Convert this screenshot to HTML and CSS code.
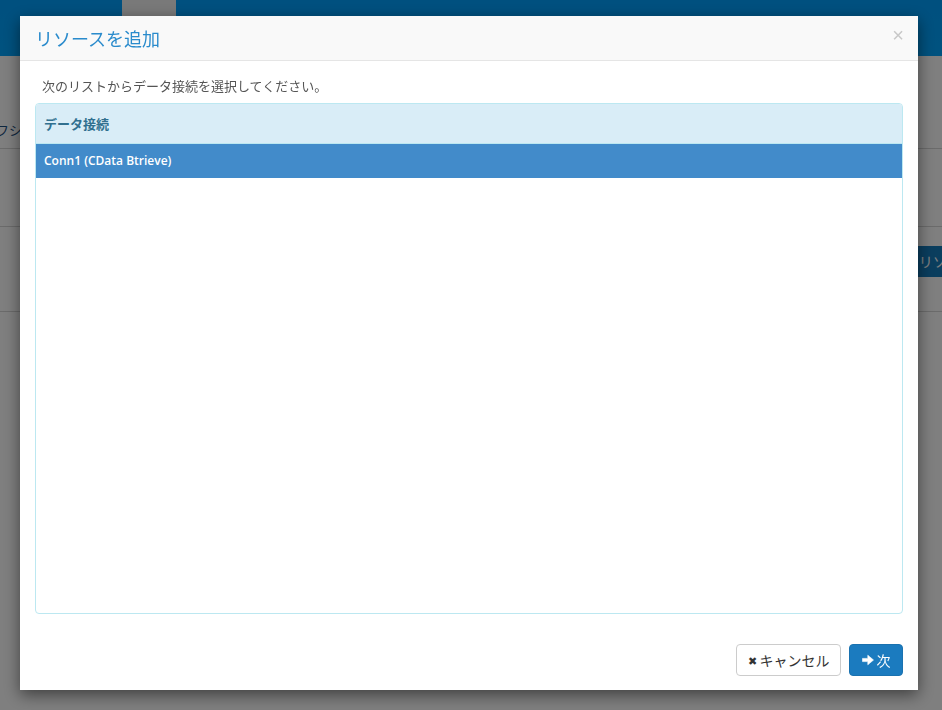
FILE: index.html
```html
<!DOCTYPE html>
<html lang="ja">
<head>
<meta charset="UTF-8">
<title>リソースを追加</title>
<link rel="stylesheet" href="styles.css">
</head>
<body>

<div class="topbar">
  <div class="tab"></div>
</div>

<div class="page">
  <div class="row row-first"><span class="side-text">フシ</span></div>
  <div class="row row-second"><span class="side-btn">リソース</span></div>
</div>

<div class="backdrop"></div>

<div class="modal">
  <div class="modal-header">
    <h4 class="modal-title">リソースを追加</h4>
    <span class="close">&times;</span>
  </div>
  <div class="modal-body">
    <p class="hint">次のリストからデータ接続を選択してください。</p>
    <div class="panel">
      <div class="panel-heading">データ接続</div>
      <ul class="conn-list">
        <li class="selected">Conn1 (CData Btrieve)</li>
      </ul>
    </div>
  </div>
  <div class="modal-footer">
    <button class="btn btn-default"><span class="ico">&#10006;</span>キャンセル</button>
    <button class="btn btn-primary">
      <svg class="arrow" width="12" height="12" viewBox="0 0 12 12"><path d="M0.5 4.4h5.3V1.2L11.5 6 5.8 10.8V7.6H0.5z" fill="#fff" stroke="#fff" stroke-width="0.6" stroke-linejoin="round"/></svg>次
    </button>
  </div>
</div>

</body>
</html>
```

FILE: styles.css
```css
body {
  margin: 0;
  font-family: "Noto Sans CJK JP", "Open Sans", sans-serif;
  background-color: #fff;
  height: 710px;
  overflow: hidden;
}

.topbar {
  height: 56px;
  background: linear-gradient(#00a0ff, #00a5ff);
}

.tab {
  margin-left: 122px;
  width: 54px;
  height: 56px;
  background-color: #f2f2f2;
}

.page {
  padding-top: 92px;
}

.row {
  border-top: 1px solid #d6d6d6;
  position: relative;
}

.row-first {
  height: 77px;
}

.row-second {
  height: 84px;
  border-bottom: 1px solid #d6d6d6;
}

.side-text {
  position: absolute;
  left: -4px;
  top: -29px;
  font-size: 13px;
  color: #1d4e7e;
}

.side-btn {
  position: absolute;
  right: -40px;
  top: 19px;
  height: 31px;
  line-height: 31px;
  padding: 0 8px;
  background-color: #157cbd;
  color: #fff;
  font-size: 14px;
  white-space: nowrap;
}

.backdrop {
  position: fixed;
  left: 0;
  top: 0;
  right: 0;
  bottom: 0;
  background-color: rgba(0, 0, 0, 0.5);
}

.modal {
  position: fixed;
  left: 20px;
  top: 16px;
  width: 898px;
  height: 674px;
  background-color: #fff;
  box-shadow: 0 5px 15px rgba(0, 0, 0, 0.5);
  display: flex;
  flex-direction: column;
}

.modal-header {
  height: 44px;
  background-color: #f9f9f9;
  border-bottom: 1px solid #e5e5e5;
  display: flex;
  align-items: center;
  justify-content: space-between;
  padding: 0 16px 0 15px;
}

.modal-title {
  margin: 0;
  font-size: 18px;
  font-weight: normal;
  color: #2a8bcc;
}

.close {
  font-family: "Liberation Sans", sans-serif;
  font-size: 20px;
  color: #c8c8c8;
  margin-right: -2px;
  margin-top: -6px;
}

.modal-body {
  flex: 1;
  padding: 15px;
  display: flex;
  flex-direction: column;
}

.hint {
  margin: 0 0 7px;
  padding-left: 7px;
  font-size: 13px;
  line-height: 20px;
  color: #555;
}

.panel {
  flex: 1;
  border: 1px solid #bce8f1;
  border-radius: 4px;
  overflow: hidden;
}

.panel-heading {
  height: 39px;
  line-height: 39px;
  padding-left: 8px;
  background-color: #d9edf7;
  border-bottom: 1px solid #bce8f1;
  color: #31708f;
  font-size: 13px;
  font-weight: bold;
}

.conn-list {
  list-style: none;
  margin: 0;
  padding: 0;
}

.conn-list li {
  height: 34px;
  line-height: 34px;
  padding-left: 8px;
  font-family: "Open Sans", "Noto Sans CJK JP", sans-serif;
  font-size: 12px;
  font-weight: 600;
}

.conn-list .selected {
  background-color: #428bca;
  color: #fff;
}

.modal-footer {
  padding: 15px 15px 14px;
  display: flex;
  justify-content: flex-end;
  gap: 8px;
}

.btn {
  height: 32px;
  border-radius: 4px;
  font-family: "Noto Sans CJK JP", sans-serif;
  font-size: 14px;
  padding: 0;
  display: flex;
  align-items: center;
  justify-content: center;
  white-space: nowrap;
  cursor: pointer;
}

.btn-default {
  width: 105px;
  background-color: #fff;
  border: 1px solid #ccc;
  color: #333;
}

.btn-default .ico {
  font-size: 11px;
  margin-right: 3px;
  color: #333;
}

.btn-primary {
  width: 54px;
  background-color: #1b7bbf;
  border: 1px solid #1a72b0;
  color: #fff;
}

.arrow {
  margin-right: 3px;
}
```
